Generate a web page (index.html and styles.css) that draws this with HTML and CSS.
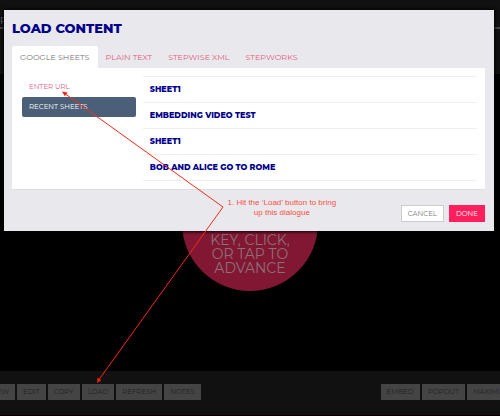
FILE: index.html
```html
<!DOCTYPE html>
<html lang="en">
<head>
<meta charset="utf-8">
<title>Load content</title>
<meta name="viewport" content="width=device-width, initial-scale=1">
<link rel="stylesheet" href="styles.css">
</head>
<body>
<div class="app">
  <header class="topbar"><span class="brand">P</span></header>
  <div class="subbar"></div>
  <main class="stage">
    <div class="prompt">KEY, CLICK,<br>OR TAP TO<br>ADVANCE</div>
  </main>
  <footer class="toolbar">
    <div class="group">
      <button class="tool" type="button">NEW</button>
      <button class="tool" type="button">EDIT</button>
      <button class="tool" type="button">COPY</button>
      <button class="tool" type="button">LOAD</button>
      <button class="tool" type="button">REFRESH</button>
      <button class="tool" type="button">NOTES</button>
    </div>
    <div class="group">
      <button class="tool" type="button">EMBED</button>
      <button class="tool" type="button">POPOUT</button>
      <button class="tool" type="button">MAXIMIZE</button>
    </div>
  </footer>
</div>

<section class="modal" role="dialog" aria-labelledby="modal-title">
  <h1 class="title" id="modal-title">LOAD CONTENT</h1>
  <nav class="tabs">
    <a class="tab active" href="#sheets">GOOGLE SHEETS</a>
    <a class="tab" href="#text">PLAIN TEXT</a>
    <a class="tab" href="#xml">STEPWISE XML</a>
    <a class="tab" href="#stepworks">STEPWORKS</a>
  </nav>
  <div class="panel" id="sheets">
    <nav class="pills">
      <a class="pill" href="#url">ENTER URL</a>
      <a class="pill selected" href="#recent">RECENT SHEETS</a>
    </nav>
    <ul class="sheets">
      <li class="sheet">SHEET1</li>
      <li class="sheet">EMBEDDING VIDEO TEST</li>
      <li class="sheet">SHEET1</li>
      <li class="sheet">BOB AND ALICE GO TO ROME</li>
    </ul>
  </div>
  <div class="actions">
    <p class="note">1. Hit the ‘Load’ button to bring<br>up this dialogue</p>
    <button class="button" type="button">CANCEL</button>
    <button class="button primary" type="button">DONE</button>
  </div>
</section>

<svg class="arrows" width="500" height="416" viewBox="0 0 500 416" aria-hidden="true">
  <path d="M64 93 L223 207 L98 381" fill="none" stroke="#f52a1a" stroke-width="1"/>
  <path d="M62 91.500 L67.500 92.500 L64.800 96.300 Z M97 383 L97.600 377.500 L101.300 380.200 Z" fill="#f52410"/>
</svg>
</body>
</html>
```
FILE: styles.css
```css
* {
  box-sizing: border-box;
}

body {
  margin: 0;
  background: #000;
  font-family: Montserrat, Inter, sans-serif;
  overflow: hidden;
}

.app {
  display: flex;
  flex-direction: column;
  height: 100vh;
}

.topbar {
  height: 29px;
  padding-top: 14px;
  background: #111;
  border-bottom: 2px solid #444;
}

.brand {
  display: block;
  font-size: 10px;
  line-height: 14px;
  color: #777;
}

.subbar {
  height: 45px;
  background: #111;
}

.stage {
  flex: 1;
  display: flex;
  justify-content: center;
  align-items: center;
  background: #000;
}

.prompt {
  display: flex;
  align-items: center;
  justify-content: center;
  width: 136px;
  height: 136px;
  padding-top: 62px;
  border-radius: 50%;
  background: #821733;
  color: #8d7076;
  font-size: 14px;
  line-height: 14px;
  text-align: center;
}

.toolbar {
  display: flex;
  justify-content: space-between;
  height: 45px;
  margin: 0 -15px;
  padding-top: 13px;
  background: #111;
  border-bottom: 1px solid #0a0003;
}

.group {
  display: flex;
  gap: 2px;
}

.tool {
  height: 16px;
  padding: 0 6px;
  border: 0;
  background: #444;
  color: #222;
  font: 7px/16px Montserrat, Inter, sans-serif;
}

.modal {
  position: absolute;
  top: 10px;
  left: 4px;
  right: 6px;
  padding: 8px 9px 9px 8px;
  background: #e9e8ed;
  box-shadow: 0 0 3px 1px #000;
}

.title {
  margin: 0 0 8px;
  color: #00008b;
  font-size: 13px;
  font-weight: 800;
  line-height: 20px;
}

.tabs {
  display: flex;
}

.tab {
  padding: 0 8px;
  border-radius: 2px 2px 0 0;
  color: #e0607f;
  font-size: 8px;
  line-height: 22px;
  text-decoration: none;
}

.tab.active {
  background: #fff;
  color: #777;
}

.panel {
  display: flex;
  gap: 7px;
  padding: 8px 8px 8px 10px;
  background: #fff;
  border-bottom: 1px solid #dedde2;
}

.pills {
  flex: 0 0 25%;
}

.pill {
  display: block;
  padding: 0 7px;
  border-radius: 2px;
  color: #e0607f;
  font-size: 7px;
  line-height: 21px;
  text-decoration: none;
}

.pill.selected {
  background: #4b6078;
  color: #fff;
  line-height: 20px;
}

.sheets {
  flex: 1;
  margin: 0;
  padding: 0;
  list-style: none;
  border-top: 1px solid #eee;
}

.sheet {
  padding: 0 7px;
  border-bottom: 1px solid #eee;
  color: #00008b;
  font-size: 8px;
  font-weight: 800;
  line-height: 25px;
}

.actions {
  display: flex;
  align-items: flex-end;
  gap: 5px;
  padding-top: 8px;
}

.note {
  flex: 1;
  margin: 0;
  padding: 0 0 4px 156px;
  color: #f9503f;
  font-family: "Liberation Sans", Arial, sans-serif;
  font-size: 8px;
  line-height: 10px;
  text-align: center;
}

.button {
  height: 17px;
  padding: 0 6px;
  border: 1px solid #ccc;
  background: #fff;
  color: #777;
  font: 7px/15px Montserrat, Inter, sans-serif;
}

.button.primary {
  border-color: #ff1f5c;
  background: #ff1f5c;
  color: #fff;
}

.arrows {
  position: absolute;
  top: 0;
  left: 0;
}
```
